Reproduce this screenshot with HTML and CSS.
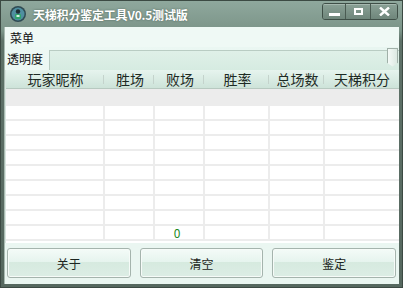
FILE: index.html
```html
<!DOCTYPE html>
<html lang="zh-CN">
<head>
  <meta charset="UTF-8" />
  <title>天梯积分鉴定工具</title>
  <link rel="stylesheet" href="styles.css">
</head>
<body>

  <div class="window">
    <div class="titlebar">
      <svg class="app-icon" width="18" height="18" viewBox="0 0 18 18">
        <circle cx="9" cy="9" r="8" fill="#2f4a52" />
        <circle cx="9" cy="9" r="6.5" fill="#4f8fa0" />
        <circle cx="9" cy="6.5" r="2.2" fill="#1f3035" />
        <rect x="6" y="9" width="6" height="5" rx="1" fill="#2fa36b" />
        <rect x="7.5" y="10" width="3" height="2" fill="#d8f0e4" />
      </svg>
      <span class="title">天梯积分鉴定工具V0.5测试版</span>
      <div class="caption-buttons">
        <span class="cap-btn cap-min">
          <svg width="11" height="4" viewBox="0 0 11 4"><rect x="0" y="0" width="11" height="3" fill="#fff" /></svg>
        </span>
        <span class="cap-btn cap-max">
          <svg width="9" height="7" viewBox="0 0 9 7"><rect x="1" y="1" width="7" height="5" fill="none" stroke="#fff" stroke-width="2" /></svg>
        </span>
        <span class="cap-btn cap-close">
          <svg width="11" height="9" viewBox="0 0 11 9"><path d="M1 0.5 L10 8.5 M10 0.5 L1 8.5" stroke="#fff" stroke-width="2.4" /></svg>
        </span>
      </div>
    </div>

    <div class="client">
      <div class="menubar">
        <span class="menu-item">菜单</span>
      </div>

      <div class="opacity-row">
        <span class="opacity-label">透明度</span>
        <div class="trackbar">
          <div class="thumb"></div>
        </div>
      </div>

      <div class="grid">
        <div class="grid-head">
          <div class="head-cell">玩家昵称</div>
          <div class="head-cell">胜场</div>
          <div class="head-cell">败场</div>
          <div class="head-cell">胜率</div>
          <div class="head-cell">总场数</div>
          <div class="head-cell last">天梯积分</div>
        </div>
        <div class="grid-blank"></div>
        <div class="grid-body">
          <div class="cell"></div><div class="cell"></div><div class="cell"></div><div class="cell"></div><div class="cell"></div><div class="cell"></div>
          <div class="cell"></div><div class="cell"></div><div class="cell"></div><div class="cell"></div><div class="cell"></div><div class="cell"></div>
          <div class="cell"></div><div class="cell"></div><div class="cell"></div><div class="cell"></div><div class="cell"></div><div class="cell"></div>
          <div class="cell"></div><div class="cell"></div><div class="cell"></div><div class="cell"></div><div class="cell"></div><div class="cell"></div>
          <div class="cell"></div><div class="cell"></div><div class="cell"></div><div class="cell"></div><div class="cell"></div><div class="cell"></div>
          <div class="cell"></div><div class="cell"></div><div class="cell"></div><div class="cell"></div><div class="cell"></div><div class="cell"></div>
          <div class="cell"></div><div class="cell"></div><div class="cell"></div><div class="cell"></div><div class="cell"></div><div class="cell"></div>
          <div class="cell"></div><div class="cell"></div><div class="cell"></div><div class="cell"></div><div class="cell"></div><div class="cell"></div>
          <div class="cell"></div><div class="cell"></div><div class="cell total">0</div><div class="cell"></div><div class="cell"></div><div class="cell"></div>
        </div>
      </div>

      <div class="actions">
        <button class="action-btn">关于</button>
        <button class="action-btn">清空</button>
        <button class="action-btn">鉴定</button>
      </div>
    </div>
  </div>

</body>
</html>
```

FILE: styles.css
```css
html, body {
  margin: 0;
  padding: 0;
  width: 403px;
  height: 288px;
  overflow: hidden;
  font-family: "Noto Sans CJK SC", "Noto Sans", sans-serif;
  background-color: #4f6158;
}

.window {
  width: 403px;
  height: 288px;
  box-sizing: border-box;
  display: flex;
  flex-direction: column;
  background: linear-gradient(#8fa89d, #7b9488 30px, #5e7168 40px, #56685f);
  border: 1px solid #3c4a43;
}

.titlebar {
  height: 26px;
  display: flex;
  align-items: center;
  padding-left: 8px;
  box-sizing: border-box;
}

.app-icon {
  flex: none;
}

.title {
  margin-left: 6px;
  font-size: 12px;
  font-weight: bold;
  color: #ffffff;
  text-shadow: 0 0 2px rgba(40, 60, 50, 0.6);
  letter-spacing: -0.2px;
}

.caption-buttons {
  margin-left: auto;
  margin-right: 4px;
  margin-top: -6px;
  display: flex;
  border: 1px solid #3f4f47;
  border-radius: 3px;
  overflow: hidden;
}

.cap-btn {
  height: 15px;
  display: flex;
  align-items: center;
  justify-content: center;
  background: linear-gradient(#8aa196, #6f867b);
  border-left: 1px solid #4a5b52;
  box-shadow: inset 0 1px 0 rgba(255, 255, 255, 0.25);
}

.cap-btn:first-child {
  border-left: none;
}

.cap-min {
  width: 22px;
  align-items: flex-end;
  padding-bottom: 2px;
  box-sizing: border-box;
}

.cap-max {
  width: 24px;
}

.cap-close {
  width: 26px;
}

.client {
  flex: 1;
  margin: 0 3px 3px 3px;
  display: flex;
  flex-direction: column;
  background: linear-gradient(135deg, #eef9f5, #e4f3ed);
  border-left: 1px solid #a9bbb2;
}

.menubar {
  height: 20px;
  display: flex;
  align-items: center;
  padding-left: 5px;
  background-color: #eff9f5;
}

.menu-item {
  font-size: 12px;
  color: #111;
}

.opacity-row {
  height: 23px;
  display: flex;
  align-items: center;
}

.opacity-label {
  width: 42px;
  padding-left: 2px;
  font-size: 12px;
  color: #111;
  box-sizing: border-box;
}

.trackbar {
  flex: 1;
  height: 19px;
  margin-left: 2px;
  margin-top: 2px;
  position: relative;
  background: linear-gradient(#dff0e8, #d6ebe1);
  border-top: 1px solid #b9ccc3;
  border-left: 1px solid #b9ccc3;
}

.thumb {
  position: absolute;
  right: 1px;
  top: -3px;
  width: 9px;
  height: 18px;
  background: linear-gradient(90deg, #f4faf7, #dce9e2);
  border: 1px solid #a0b0a8;
  border-bottom: none;
  clip-path: polygon(0 0, 100% 0, 100% 80%, 50% 100%, 0 80%);
}

.grid {
  height: 173px;
  display: flex;
  flex-direction: column;
  background-color: #ffffff;
  border-left: 1px solid #d9e6e0;
}

.grid-head {
  height: 18px;
  display: grid;
  grid-template-columns: 99px 50px 50px 65px 55px 1fr;
  background: linear-gradient(#e6f4ee, #cde3d9);
  border-bottom: 1px solid #b7c9c0;
}

.head-cell {
  font-size: 14px;
  line-height: 18px;
  text-align: center;
  color: #1d2a24;
  position: relative;
}

.head-cell::after {
  content: "";
  position: absolute;
  right: 1px;
  top: 5px;
  height: 9px;
  border-right: 1px solid #c4d3cc;
}

.head-cell.last::after {
  display: none;
}

.grid-blank {
  height: 17px;
  background-color: #ececec;
}

.grid-body {
  flex: 1;
  display: grid;
  grid-template-columns: 99px 50px 50px 65px 55px 1fr;
  grid-auto-rows: 15px;
  align-content: start;
}

.cell {
  border-bottom: 2px solid #ececec;
  border-right: 2px solid #ececec;
  box-sizing: border-box;
  font-size: 12px;
  line-height: 13px;
  text-align: center;
}

.cell:nth-child(6n) {
  border-right: none;
}

.cell.total {
  color: #1c8a1c;
  padding-right: 4px;
}

.actions {
  flex: 1;
  display: flex;
  gap: 9px;
  padding: 5px 3px 0 2px;
  background-color: #eaf6f1;
}

.action-btn {
  flex: 1;
  height: 30px;
  font-family: "Noto Sans CJK SC", "Noto Sans", sans-serif;
  font-size: 12px;
  color: #1b2520;
  background: linear-gradient(#f4fbf8, #e6f4ee 45%, #d6eadf 46%, #dcede5);
  border: 1px solid #a5b4ad;
  border-radius: 3px;
  box-shadow: inset 0 0 0 1px #f6fbf8;
  padding: 0;
}
```
